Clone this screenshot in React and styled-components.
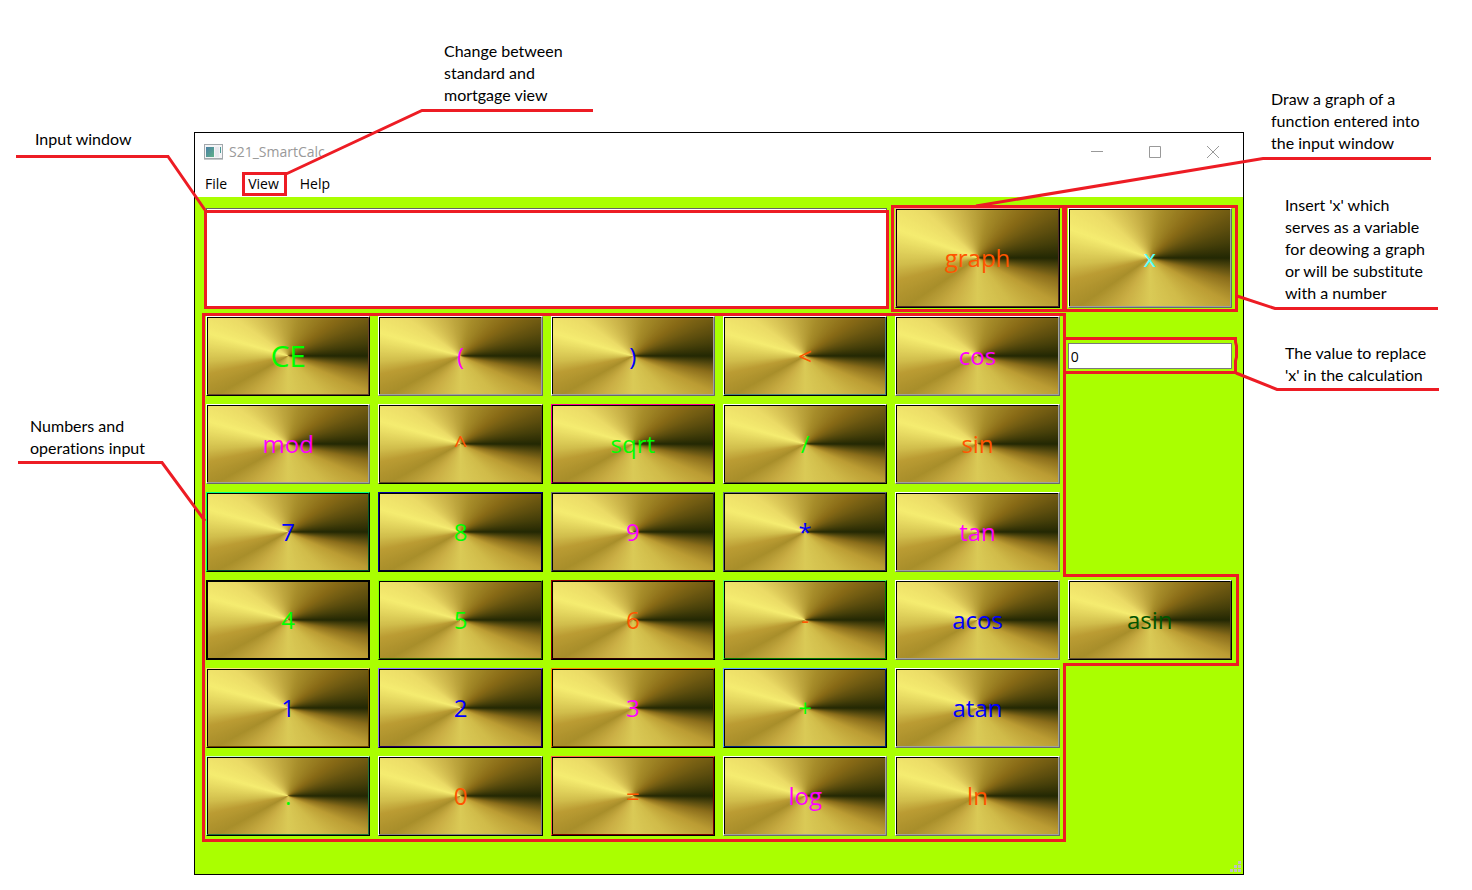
import React from 'react';
import styled, { createGlobalStyle } from 'styled-components';

const GlobalStyle = createGlobalStyle`
  *, *::before, *::after { box-sizing: border-box; }
  body { margin: 0; background: #fff; }
`;

const uiFont = '"Open Sans", "Noto Sans", sans-serif';
const noteFont = 'Lato, "Open Sans", sans-serif';
const keyFont = '"Open Sans", "Noto Sans", sans-serif';
const lime = '#aaff00';
const red = '#ed1c24';

/* Brass sweep: [turn fraction counter-clockwise from the right, r, g, b] */
const brass = [
  [0, 35, 40, 3],
  [0.16, 136, 106, 22],
  [0.225, 166, 140, 41],
  [0.285, 204, 181, 74],
  [0.345, 235, 219, 102],
  [0.415, 245, 236, 112],
  [0.52, 209, 190, 76],
  [0.57, 187, 156, 51],
  [0.635, 168, 142, 42],
  [0.695, 202, 174, 68],
  [0.75, 218, 202, 86],
  [0.815, 208, 187, 73],
  [0.88, 187, 156, 51],
  [0.935, 137, 108, 26],
  [1, 35, 40, 3],
];

function colourAt(t) {
  const i = Math.max(1, brass.findIndex((s) => s[0] >= t));
  const a = brass[i - 1];
  const b = brass[i];
  const k = (t - a[0]) / (b[0] - a[0]);
  const mix = (n) => Math.round(a[n] + (b[n] - a[n]) * k);
  return `rgb(${mix(1)}, ${mix(2)}, ${mix(3)})`;
}

/* The sweep is defined on a unit square, so its angles flatten with the key. */
function brassSweep(ratio) {
  const steps = 200;
  const stops = [];
  for (let i = 0; i <= steps; i += 1) {
    const turn = (i / steps) * 2 * Math.PI;
    let angle = Math.atan2(Math.sin(turn) * ratio, Math.cos(turn));
    if (i === steps) angle = 2 * Math.PI;
    else if (i === 0) angle = 0;
    else if (angle < 0) angle += 2 * Math.PI;
    stops.push(`${colourAt(1 - i / steps)} ${((angle * 180) / Math.PI).toFixed(2)}deg`);
  }
  return `conic-gradient(from 90deg, ${stops.join(', ')})`;
}

const keySweep = brassSweep(78 / 163);
const tallSweep = brassSweep(98 / 163);

const Page = styled.main`
  position: relative;
  display: grid;
  grid-template-columns: 194fr 1050fr 228fr;
  min-width: 1100px;
  padding-bottom: 15px;
`;

const Column = styled.div`
  display: flex;
  flex-direction: column;
  min-width: 0;
  padding-top: ${(p) => p.$top}px;
`;

const Note = styled.p`
  margin: 0 0 ${(p) => p.$after || 0}px;
  padding-left: ${(p) => p.$indent}px;
  font: 16px/22px ${noteFont};
  font-variant-ligatures: none;
  color: #000;
  white-space: pre;
`;

const Window = styled.section`
  border: 1px solid #000;
  background: #fff;
`;

const TitleBar = styled.header`
  display: flex;
  align-items: center;
  height: 37px;
  padding: 0 1px 0 9px;
`;

const Title = styled.h1`
  flex: 1;
  margin: 0 0 0 6px;
  font: 14px/20px ${uiFont};
  color: #999;
`;

const CaptionButton = styled.button`
  display: grid;
  place-items: center;
  width: 58px;
  height: 36px;
  padding: 0;
  border: 0;
  background: none;
`;

const MenuBar = styled.nav`
  display: flex;
  gap: 1px;
  height: 27px;
`;

const MenuItem = styled.button`
  padding: 0 10px;
  border: 0;
  background: none;
  font: 14px/26px ${uiFont};
  color: #000;
`;

const Keypad = styled.div`
  display: grid;
  grid-template-columns: repeat(6, minmax(0, 1fr));
  grid-template-rows: 100px;
  grid-auto-rows: 80px;
  gap: 8px;
  padding: 11px 11px 0;
  background: ${lime};
`;

const Display = styled.input`
  grid-column: span 4;
  width: 100%;
  height: 100%;
  padding: 0 8px;
  border: 1px solid #646464;
  background: #fff;
  font: 24px ${uiFont};
`;

const ValueField = styled.input`
  align-self: center;
  width: 100%;
  height: 26px;
  padding: 0 2px;
  border: 1px solid #7a7a7a;
  background: #fff;
  font: 14px/24px ${uiFont};
  color: #000;
`;

const Key = styled.button`
  grid-column: ${(p) => p.$column || 'auto'};
  padding: 0;
  border: 1px solid;
  border-color: ${(p) => `${p.$edge[0]} ${p.$edge[1]} ${p.$edge[1]} ${p.$edge[0]}`};
  background: ${(p) => (p.$tall ? tallSweep : keySweep)};
  box-shadow: inset -1px -1px ${(p) => p.$edge[2]}, inset 1px 1px #000;
  font: 500 ${(p) => (p.$large ? 30 : 24)}px/32px ${keyFont};
  color: ${(p) => p.$ink};
`;

const StatusBar = styled.footer`
  display: flex;
  justify-content: flex-end;
  align-items: flex-end;
  height: 38px;
  padding: 2px;
  background: ${lime};
`;

const Callouts = styled.svg`
  position: absolute;
  inset: 0;
  width: 100%;
  height: 100%;
  pointer-events: none;
  fill: none;
  stroke: ${red};
  stroke-width: 3px;

  path { vector-effect: non-scaling-stroke; }
`;

const green = '#00ff00';
const magenta = '#ff00ff';
const blue = '#0000ff';
const orange = '#ff5500';
const plain = ['#fff', '#696969', '#a0a0a0'];

const topKeys = [
  { label: 'graph', ink: orange, edge: ['#ff9a9a', '#000', '#4d2a2a'] },
  { label: 'x', ink: '#55ffff', edge: plain },
];

const firstRow = [
  { label: 'CE', ink: green, edge: ['#fff', '#000', '#6b4430'], large: true },
  { label: '(', ink: magenta, edge: plain },
  { label: ')', ink: blue, edge: plain },
  { label: '<', ink: orange, edge: ['#fff', '#000', '#4f8080'] },
  { label: 'cos', ink: magenta, edge: plain },
];

const keys = [
  { label: 'mod', ink: magenta, edge: plain, column: 1 },
  { label: '^', ink: orange, edge: ['#fffbe0', '#000', '#5c4a20'] },
  { label: 'sqrt', ink: green, edge: ['#ff0096', '#000', '#5a0035'] },
  { label: '/', ink: green, edge: ['#fff', '#000', '#5c5030'] },
  { label: 'sin', ink: orange, edge: plain },
  { label: '7', ink: blue, edge: ['#00ff80', '#000', '#00552b'], column: 1 },
  { label: '8', ink: green, edge: ['#0000a0', '#000', '#000038'] },
  { label: '9', ink: magenta, edge: ['#707070', '#000', '#242424'] },
  { label: '*', ink: blue, edge: ['#66707a', '#000', '#2c3038'] },
  { label: 'tan', ink: magenta, edge: plain },
  { label: '4', ink: green, edge: ['#000', '#000', '#000'], column: 1 },
  { label: '5', ink: green, edge: ['#80ff00', '#000', '#2a5500'] },
  { label: '6', ink: orange, edge: ['#900000', '#000', '#300000'] },
  { label: '-', ink: orange, edge: ['#5cff5c', '#000', '#007a00'] },
  { label: 'acos', ink: blue, edge: plain },
  { label: 'asin', ink: '#005500', edge: ['#fff', '#000', '#5c4a30'] },
  { label: '1', ink: blue, edge: ['#ffdf80', '#000', '#6b4400'], column: 1 },
  { label: '2', ink: blue, edge: ['#9070ff', '#000', '#20005c'] },
  { label: '3', ink: magenta, edge: ['#ff8000', '#000', '#5c3000'] },
  { label: '+', ink: green, edge: ['#60a0ff', '#000', '#002870'] },
  { label: 'atan', ink: blue, edge: plain },
  { label: '.', ink: green, edge: ['#c8ffd8', '#000', '#207040'], column: 1 },
  { label: '0', ink: orange, edge: ['#fff', '#000', '#808080'] },
  { label: '=', ink: orange, edge: ['#ff6048', '#000', '#780000'] },
  { label: 'log', ink: magenta, edge: plain },
  { label: 'ln', ink: orange, edge: plain },
];

const renderKey = (k, tall) => (
  <Key
    key={k.label}
    type="button"
    $ink={k.ink}
    $edge={k.edge}
    $large={k.large}
    $column={k.column}
    $tall={tall}
  >
    {k.label}
  </Key>
);

const AppIcon = () => (
  <svg width="19" height="16" viewBox="0 0 19 16" aria-hidden="true">
    <defs>
      <linearGradient id="pane" x1="0" y1="0" x2="1" y2="1">
        <stop offset="0" stopColor="#4a7fa5" />
        <stop offset="1" stopColor="#5fb088" />
      </linearGradient>
    </defs>
    <rect x="0.5" y="0.5" width="18" height="14" fill="#f4f4f6" stroke="#a3a8ac" />
    <rect x="2" y="3" width="8" height="10" fill="url(#pane)" />
    <rect x="11" y="3" width="4" height="10" fill="#e8e8ee" />
    <rect x="16" y="3" width="1" height="6" fill="#4c9a98" />
    <path d="M0 15.5H19" stroke="#c4c8ca" />
  </svg>
);

const Grip = () => (
  <svg width="11" height="11" viewBox="0 0 11 11" fill="#bfbfbf" aria-hidden="true">
    <path d="M8 0h3v3h-3zM4 4h3v3h-3zM8 4h3v3h-3zM0 8h3v3h-3zM4 8h3v3h-3zM8 8h3v3h-3z" />
  </svg>
);

export default function App() {
  return (
    <>
      <GlobalStyle />
      <Page>
        <Column $top={128}>
          <Note $indent={35} $after={265}>Input window</Note>
          <Note $indent={30}>{'Numbers and\noperations input'}</Note>
        </Column>

        <Column $top={40}>
          <Note $indent={250} $after={26}>
            {'Change between\nstandard and\nmortgage view'}
          </Note>
          <Window>
            <TitleBar>
              <AppIcon />
              <Title>S21_SmartCalc</Title>
              <CaptionButton type="button" aria-label="Minimize">
                <svg width="12" height="13" fill="none" stroke="#999">
                  <path d="M0 6.5H12" />
                </svg>
              </CaptionButton>
              <CaptionButton type="button" aria-label="Maximize">
                <svg width="12" height="12" fill="none" stroke="#999">
                  <path d="M0.5 0.5H11.5V11.5H0.5Z" />
                </svg>
              </CaptionButton>
              <CaptionButton type="button" aria-label="Close">
                <svg width="12" height="12" fill="none" stroke="#999">
                  <path d="M0 0L12 12M12 0L0 12" />
                </svg>
              </CaptionButton>
            </TitleBar>
            <MenuBar>
              <MenuItem type="button">File</MenuItem>
              <MenuItem type="button">View</MenuItem>
              <MenuItem type="button">Help</MenuItem>
            </MenuBar>
            <Keypad>
              <Display type="text" aria-label="Expression" />
              {topKeys.map((k) => renderKey(k, true))}
              {firstRow.map((k) => renderKey(k))}
              <ValueField type="text" aria-label="Value of x" defaultValue="0" />
              {keys.map((k) => renderKey(k))}
            </Keypad>
            <StatusBar>
              <Grip />
            </StatusBar>
          </Window>
        </Column>

        <Column $top={88}>
          <Note $indent={27} $after={40}>
            {'Draw a graph of a\nfunction entered into\nthe input window'}
          </Note>
          <Note $indent={41} $after={38}>
            {"Insert 'x' which\nserves as a variable\nfor deowing a graph\nor will be substitute\nwith a number"}
          </Note>
          <Note $indent={41}>{"The value to replace\n'x' in the calculation"}</Note>
        </Column>

        <Callouts viewBox="0 0 1472 890" preserveAspectRatio="none" aria-hidden="true">
          <path d="M16 156.5H168L205 210" />
          <path d="M205.5 211.5H887.5V307.5H205.5Z" />
          <path d="M593 110.5H422L286 174" />
          <path d="M243.5 173.5H285.5V194.5H243.5Z" />
          <path d="M1431 158.5H1263L976 206" />
          <path d="M892.5 206.5H1063.5V310.5H892.5Z" />
          <path d="M1065.5 206.5H1236.5V310.5H1065.5Z" />
          <path d="M1438 308.5H1275L1237 296" />
          <path d="M1065 338.5H1235.5V342L1236.5 346V357L1235.5 361V372.5H1065" />
          <path d="M1439 389.5H1277L1236 373" />
          <path d="M18 462.5H162L205 521" />
          <path d="M203.5 314.5H1064.5V575.5H1237.5V664.5H1064.5V840.5H203.5Z" />
        </Callouts>
      </Page>
    </>
  );
}
